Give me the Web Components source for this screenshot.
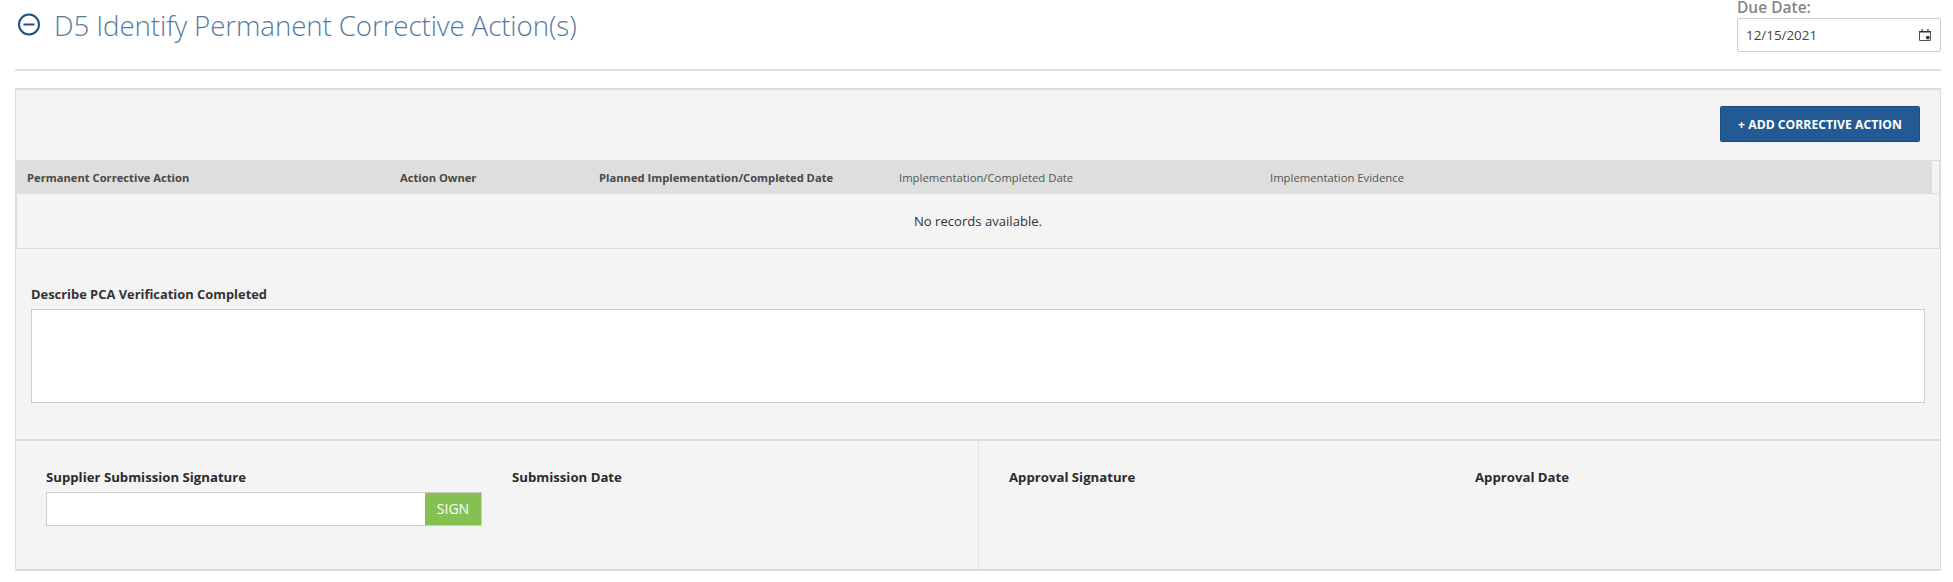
<!DOCTYPE html>
<html lang="en">
<head>
<meta charset="utf-8">
<title>D5</title>
<style>
  html, body { margin: 0; background: #fff; overflow: hidden; }
  body { font-family: "Open Sans", "Noto Sans", sans-serif; color: #333; height: 582px; }
</style>
</head>
<body>
<section-page>
  <section-title slot="title">D5 Identify Permanent Corrective Action(s)</section-title>
  <date-field slot="aside" label="Due Date:" value="12/15/2021"></date-field>
  <action-grid></action-grid>
  <note-field label="Describe PCA Verification Completed"></note-field>
  <sign-bar></sign-bar>
</section-page>

<script>
class SectionPage extends HTMLElement {
    constructor() {
        super();
        this.attachShadow({ mode: 'open' });
        this.shadowRoot.innerHTML = `
            <style>
                :host { display: block; padding: 0 12px 0 15px; }
                .head {
                    display: flex;
                    justify-content: space-between;
                    height: 69px;
                    border-bottom: 2px solid #e0e0e0;
                    box-sizing: content-box;
                }
                .panel {
                    margin-top: 17px;
                    background: #f4f4f4;
                    border: 1px solid #dcdcdc;
                    border-width: 2px 1px 2px 1px;
                    height: 479px;
                    box-sizing: content-box;
                }
            </style>
            <div class="head">
                <slot name="title"></slot>
                <slot name="aside"></slot>
            </div>
            <div class="panel"><slot></slot></div>
        `;
    }
}

class SectionTitle extends HTMLElement {
    constructor() {
        super();
        this.attachShadow({ mode: 'open' });
        this.shadowRoot.innerHTML = `
            <style>
                :host { display: flex; align-items: flex-start; padding: 13px 0 0 2px; }
                svg { display: block; width: 24px; height: 24px; margin-right: 13px; }
                .text {
                    font-size: 27.7px;
                    font-weight: 300;
                    line-height: 24px;
                    color: #557ba0;
                    letter-spacing: -0.1px;
                    white-space: nowrap;
                }
            </style>
            <svg viewBox="0 0 24 24" fill="none" stroke="#1f4f80" stroke-width="2">
                <circle cx="12" cy="11.5" r="10"/>
                <path d="M6.5 11.5h11"/>
            </svg>
            <span class="text"><slot></slot></span>
        `;
    }
}

class DateField extends HTMLElement {
    constructor() {
        super();
        this.attachShadow({ mode: 'open' });
        this.shadowRoot.innerHTML = `
            <style>
                :host { display: block; width: 204px; }
                label {
                    display: block;
                    height: 16px;
                    font-size: 15.5px;
                    line-height: 14px;
                    font-weight: 600;
                    color: #858585;
                    margin-bottom: 2px;
                }
                .box {
                    display: flex;
                    align-items: center;
                    justify-content: space-between;
                    height: 34px;
                    box-sizing: border-box;
                    padding: 0 8px 0 8px;
                    border: 1px solid #ccc;
                    border-radius: 2px;
                    background: #fff;
                    font-size: 13.4px;
                    color: #444;
                }
                svg { display: block; width: 14px; height: 14px; }
            </style>
            <label></label>
            <div class="box">
                <span class="value"></span>
                <svg viewBox="0 0 14 14">
                    <path d="M1.5 3.5h11v9h-11z" fill="none" stroke="#555"/>
                    <path d="M1 3h12v1.4H1zM3.5 1h1.2v2H3.5zM9.3 1h1.2v2H9.3zM8.2 8h3.2v3.2H8.2z" fill="#333"/>
                </svg>
            </div>
        `;
    }

    connectedCallback() {
        this.shadowRoot.querySelector('label').textContent = this.getAttribute('label');
        this.shadowRoot.querySelector('.value').textContent = this.getAttribute('value');
    }
}

class ActionGrid extends HTMLElement {
    constructor() {
        super();
        this.attachShadow({ mode: 'open' });
        const cols = [
            ['Permanent Corrective Action', 373, true],
            ['Action Owner', 199, true],
            ['Planned Implementation/Completed Date', 300, true],
            ['Implementation/Completed Date', 371, false],
            ['Implementation Evidence', 672, false]
        ];
        const heads = cols.map(c =>
            `<div class="th ${c[2] ? 'strong' : ''}" style="width:${c[1]}px">${c[0]}</div>`).join('');
        this.shadowRoot.innerHTML = `
            <style>
                :host { display: block; font-size: 11.3px; }
                .bar {
                    display: flex;
                    justify-content: flex-end;
                    height: 70px;
                    box-sizing: border-box;
                    padding: 16px 20px 0 0;
                }
                button {
                    width: 200px;
                    height: 36px;
                    background: #235a93;
                    border: 1px solid #1d4d80;
                    border-radius: 2px;
                    color: #fff;
                    font: 700 12.2px "Open Sans", sans-serif;
                    padding: 0;
                }
                .grid { border: 1px solid #dcdcdc; border-width: 0 1px; }
                .thead { display: flex; height: 34px; background: #dedede; }
                .th {
                    box-sizing: border-box;
                    padding-left: 10px;
                    line-height: 35px;
                    color: #555;
                    border-right: 1px solid #dcdcdc;
                    white-space: nowrap;
                }
                .th:last-child { border-right: 0; }
                .strong { font-weight: 700; color: #484848; font-size: 11.2px; }
                .gutter {
                    flex: 1;
                    background: #f4f4f4;
                    border: 1px solid #dedede;
                    border-width: 1px 0;
                }
                .empty {
                    height: 54px;
                    line-height: 54px;
                    text-align: center;
                    font-size: 13.1px;
                    color: #333;
                }
                .rule { height: 1px; background: #dcdcdc; }
            </style>
            <div class="bar"><button>+ ADD CORRECTIVE ACTION</button></div>
            <div class="grid">
                <div class="thead">${heads}<div class="gutter"></div></div>
                <div class="empty">No records available.</div>
            </div>
            <div class="rule"></div>
        `;
    }
}

class NoteField extends HTMLElement {
    constructor() {
        super();
        this.attachShadow({ mode: 'open' });
        this.shadowRoot.innerHTML = `
            <style>
                :host {
                    display: block;
                    box-sizing: border-box;
                    height: 190px;
                    padding: 36px 15px 0 15px;
                }
                label {
                    display: block;
                    height: 24px;
                    line-height: 18px;
                    font-size: 12.9px;
                    font-weight: 700;
                    color: #333;
                }
                .area {
                    height: 94px;
                    box-sizing: border-box;
                    border: 1px solid #ccc;
                    background: #fff;
                }
            </style>
            <label></label>
            <div class="area"></div>
        `;
    }

    connectedCallback() {
        this.shadowRoot.querySelector('label').textContent = this.getAttribute('label');
    }
}

class SignBar extends HTMLElement {
    constructor() {
        super();
        this.attachShadow({ mode: 'open' });
        this.shadowRoot.innerHTML = `
            <style>
                :host {
                    display: grid;
                    grid-template-columns: 962px 1fr;
                    height: 130px;
                    border-top: 2px solid #dcdcdc;
                    box-sizing: border-box;
                }
                .half { display: grid; box-sizing: border-box; padding: 27px 0 0 30px; align-content: start; }
                .left { grid-template-columns: 466px 1fr; }
                .right { grid-template-columns: 466px 1fr; border-left: 1px solid #e0e0e0; }
                h4 {
                    margin: 0 0 6px;
                    font-size: 13.2px;
                    line-height: 18px;
                    font-weight: 700;
                    color: #2b2b2b;
                    white-space: nowrap;
                }
                .sign { display: flex; width: 436px; height: 34px; }
                .input {
                    flex: 1;
                    background: #fff;
                    border: 1px solid #ccc;
                    border-right: 0;
                }
                .btn {
                    width: 57px;
                    box-sizing: border-box;
                    background: #84c151;
                    border: 1px solid #ccc;
                    border-left: 0;
                    color: #fff;
                    font-size: 14px;
                    line-height: 32px;
                    text-align: center;
                }
            </style>
            <div class="half left">
                <div>
                    <h4>Supplier Submission Signature</h4>
                    <div class="sign"><div class="input"></div><div class="btn">SIGN</div></div>
                </div>
                <div><h4>Submission Date</h4></div>
            </div>
            <div class="half right">
                <div><h4>Approval Signature</h4></div>
                <div><h4>Approval Date</h4></div>
            </div>
        `;
    }
}

customElements.define('section-page', SectionPage);
customElements.define('section-title', SectionTitle);
customElements.define('date-field', DateField);
customElements.define('action-grid', ActionGrid);
customElements.define('note-field', NoteField);
customElements.define('sign-bar', SignBar);
</script>
</body>
</html>
